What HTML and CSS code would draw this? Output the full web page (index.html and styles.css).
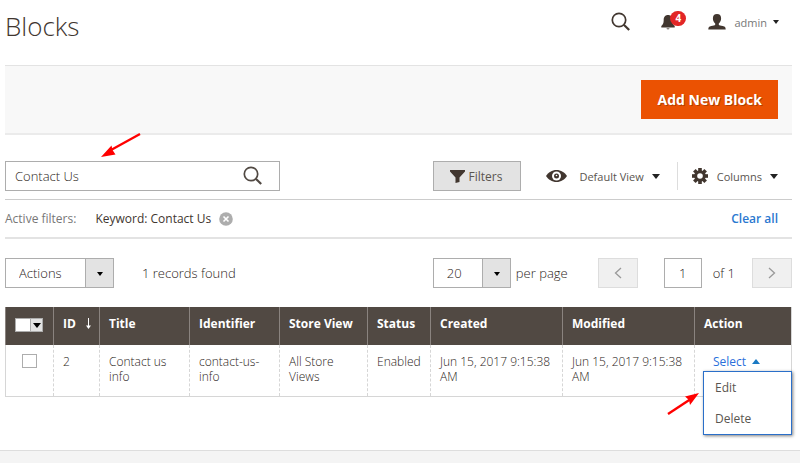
FILE: index.html
```html
<!DOCTYPE html>
<html lang="en">
<head>
  <meta charset="UTF-8">
  <meta name="viewport" content="width=device-width, initial-scale=1.0">
  <title>Blocks</title>
  <link rel="stylesheet" href="styles.css">
</head>
<body>
  <div class="page">
    <header class="page-header">
      <h1>Blocks</h1>
      <div class="header-tools">
        <button class="tool" type="button" aria-label="Search">
          <svg width="20" height="20" viewBox="0 0 20 20"><circle cx="8" cy="8" r="6.7" fill="none" stroke="#41362f" stroke-width="1.7"/><path d="M12.8 12.8l5.4 5.2" stroke="#41362f" stroke-width="2.2"/></svg>
        </button>
        <button class="tool notifications" type="button" aria-label="Notifications">
          <svg width="14" height="16" viewBox="0 0 14 16"><path d="M7 1c-3 0-4.300 2.300-4.300 5 0 3.500-.9 4.500-2.400 6v1.500h13.400V12c-1.500-1.500-2.400-2.500-2.400-6 0-2.700-1.300-5-4.300-5z" fill="#41362f"/><path d="M5.500 14h3a1.500 1.500 0 0 1-3 0z" fill="#8d8681"/></svg>
          <span class="badge">4</span>
        </button>
        <button class="tool account" type="button">
          <svg width="18" height="16" viewBox="0 0 18 16"><path d="M9 0C6.300 0 4.900 1.500 4.900 4.200c0 2.300.9 4.200 2.300 5.200v1.300c-.3.700-2 .9-4 1.300C1 12.500.3 13.300.3 15.600h17.400c0-2.300-.7-3.100-2.900-3.600-2-.4-3.700-.6-4-1.300V9.400c1.400-1 2.300-2.900 2.300-5.200C13.100 1.500 11.700 0 9 0z" fill="#41362f"/></svg>
          <span>admin</span>
          <i class="caret"></i>
        </button>
      </div>
    </header>

    <div class="page-actions">
      <button class="btn-primary" type="button">Add New Block</button>
    </div>

    <main>
      <div class="toolbar">
        <form class="search">
          <input type="text" value="Contact Us" aria-label="Search by keyword">
          <button type="submit" aria-label="Search">
            <svg width="20" height="20" viewBox="0 0 20 20"><circle cx="8" cy="8" r="6.700" fill="none" stroke="#514943" stroke-width="1.700"/><path d="M12.800 12.800l5.400 5.200" stroke="#514943" stroke-width="2.200"/></svg>
          </button>
          <svg class="pointer pointer-search" width="42" height="26" viewBox="0 0 42 26"><path d="M40 2L11 18" stroke="#f00" stroke-width="2.400"/><path d="M1 25l10.500-11.500 1 4.500 3 4.500z" fill="#f00"/></svg>
        </form>
        <button class="btn-filters" type="button">
          <svg width="15" height="13" viewBox="0 0 15 13"><path d="M0 0h15v1.500L9.500 7.500V12l-4 1V7.500L0 1.500z" fill="#41362f"/></svg>
          Filters
        </button>
        <button class="view-control" type="button">
          <svg width="21" height="14" viewBox="0 0 21 14"><path d="M10.500 1C6 1 2.300 3.400 0 7c2.300 3.600 6 6 10.500 6S18.700 10.600 21 7C18.700 3.400 15 1 10.500 1z" fill="#41362f"/><circle cx="10.500" cy="7" r="4.500" fill="#fff"/><circle cx="10.500" cy="7" r="2.500" fill="#41362f"/><circle cx="10.500" cy="6.500" r=".8" fill="#fff"/></svg>
          <span>Default View</span>
          <i class="caret"></i>
        </button>
        <button class="columns-control" type="button">
          <svg width="16" height="16" viewBox="-8 -8 16 16"><g fill="#41362f"><rect x="-1.800" y="-8" width="3.600" height="16"/><rect x="-1.800" y="-8" width="3.600" height="16" transform="rotate(45)"/><rect x="-1.800" y="-8" width="3.600" height="16" transform="rotate(90)"/><rect x="-1.800" y="-8" width="3.600" height="16" transform="rotate(135)"/><circle r="5.800"/></g><circle r="2.800" fill="#fff"/></svg>
          <span>Columns</span>
          <i class="caret"></i>
        </button>
      </div>

      <div class="active-filters">
        <span class="filters-label">Active filters:</span>
        <span class="filter">Keyword: Contact Us</span>
        <button class="filter-remove" type="button" aria-label="Remove filter">
          <svg width="14" height="14" viewBox="0 0 14 14"><circle cx="7" cy="7" r="6.800" fill="#adadad"/><path d="M4.500 4.500l5 5m0-5l-5 5" stroke="#fff" stroke-width="1.600"/></svg>
        </button>
        <a class="clear-all" href="#">Clear all</a>
      </div>

      <div class="grid-controls">
        <div class="select select-actions">
          <select aria-label="Actions"><option>Actions</option></select>
        </div>
        <span class="records">1 records found</span>
        <div class="pager">
          <div class="select select-size">
            <select id="page-size"><option>20</option></select>
          </div>
          <label for="page-size">per page</label>
          <button class="page-btn" type="button" aria-label="Previous page">
            <svg width="8" height="12" viewBox="0 0 8 12"><path d="M7 1L1.500 6 7 11" fill="none" stroke="#999" stroke-width="1.300"/></svg>
          </button>
          <input id="page-number" class="page-number" type="text" value="1">
          <label for="page-number">of 1</label>
          <button class="page-btn page-next" type="button" aria-label="Next page">
            <svg width="8" height="12" viewBox="0 0 8 12"><path d="M1 1l5.500 5L1 11" fill="none" stroke="#999" stroke-width="1.300"/></svg>
          </button>
        </div>
      </div>

      <table class="data-grid">
        <colgroup>
          <col class="col-check">
          <col class="col-id">
          <col class="col-title">
          <col class="col-identifier">
          <col class="col-store">
          <col class="col-status">
          <col>
          <col>
          <col class="col-action">
        </colgroup>
        <thead>
          <tr>
            <th>
              <div class="multicheck">
                <input type="checkbox" aria-label="Select all">
                <button type="button" aria-label="Selection options"><i class="caret"></i></button>
              </div>
            </th>
            <th>
              <div class="sorted">ID
                <svg width="5" height="11" viewBox="0 0 5 11"><path d="M2.500 0v9" stroke="#fff"/><path d="M0 7.500h5L2.500 11z" fill="#fff"/></svg>
              </div>
            </th>
            <th>Title</th>
            <th>Identifier</th>
            <th>Store View</th>
            <th>Status</th>
            <th>Created</th>
            <th>Modified</th>
            <th>Action</th>
          </tr>
        </thead>
        <tbody>
          <tr>
            <td class="check-cell"><input type="checkbox" aria-label="Select row"></td>
            <td>2</td>
            <td>Contact us info</td>
            <td>contact-us-info</td>
            <td>All Store Views</td>
            <td>Enabled</td>
            <td>Jun 15, 2017 9:15:38 AM</td>
            <td>Jun 15, 2017 9:15:38 AM</td>
            <td class="action-cell">
              <button class="action-select" type="button">Select <i class="caret caret-up"></i></button>
              <ul class="action-menu">
                <li><a href="#">Edit</a></li>
                <li><a href="#">Delete</a></li>
              </ul>
              <svg class="pointer pointer-menu" width="34" height="24" viewBox="0 0 34 24"><path d="M2 22L24 7.500" stroke="#f00" stroke-width="2.400"/><path d="M33 1L19 4.500l4 3.500 1 5z" fill="#f00"/></svg>
            </td>
          </tr>
        </tbody>
      </table>
    </main>
  </div>
  <footer></footer>
</body>
</html>
```
FILE: styles.css
```css
* {
  box-sizing: border-box;
}

body {
  margin: 0;
  min-height: 100vh;
  display: flex;
  flex-direction: column;
  font-family: "Open Sans", sans-serif;
  font-size: 12px;
  line-height: 15px;
  color: #5a5550;
  background: #fff;
}

button,
input,
select {
  font: inherit;
  color: inherit;
  margin: 0;
}

button {
  display: flex;
  align-items: center;
  padding: 0;
  border: 0;
  background: none;
  cursor: pointer;
}

svg {
  display: block;
  flex: none;
}

.page {
  padding: 0 8px 53px 5px;
}

.caret {
  flex: none;
  border: 4px solid transparent;
  border-top: 5px solid #222;
  border-bottom: 0;
}

.caret-up {
  border-top: 0;
  border-bottom: 5px solid #1979c3;
}

/* Header */
.page-header {
  display: flex;
  justify-content: space-between;
  height: 65px;
  padding: 8px 13px 0 0;
}

h1 {
  margin: 0;
  font-size: 26px;
  line-height: 36px;
  font-weight: 300;
  color: #41362f;
}

.header-tools {
  display: flex;
  align-items: center;
  height: 28px;
}

.header-tools .caret {
  border-width: 4px 3px 0;
}

.notifications {
  position: relative;
  margin: 0 33px 0 30px;
}

.badge {
  position: absolute;
  left: 9px;
  top: -3px;
  width: 16px;
  border-radius: 8px;
  background: #e22626;
  color: #fff;
  font-size: 10px;
  line-height: 15px;
  font-weight: 700;
}

.account {
  color: #777;
}

.account span {
  margin: 0 6px 0 8px;
  font-size: 11px;
}

.page-actions {
  display: flex;
  justify-content: flex-end;
  padding: 14px;
  border-top: 1px solid #e3e3e3;
  border-bottom: 2px solid #ebebeb;
  background: #f8f8f8;
}

.btn-primary {
  height: 39px;
  padding: 0 16px;
  background: #eb5202;
  color: #fff;
  font-size: 14px;
  font-weight: 700;
  text-shadow: 1px 1px 0 rgba(0, 0, 0, 0.25);
}

/* Toolbar */
.toolbar {
  display: flex;
  align-items: center;
  padding: 26px 14px 8px 0;
}

.search {
  position: relative;
  display: flex;
  flex: 0 1 275px;
  height: 30px;
  margin-right: auto;
  border: 1px solid #adadad;
}

.search input {
  flex: 1;
  min-width: 0;
  padding: 0 9px;
  border: 0;
  outline: 0;
  background: none;
}

.search button {
  padding: 0 16px;
}

.pointer {
  position: absolute;
  pointer-events: none;
}

.pointer-search {
  left: 94px;
  top: -30px;
}

.btn-filters {
  gap: 4px;
  height: 30px;
  padding: 0 18px 0 16px;
  border: 1px solid #adadad;
  background: #e3e3e3;
}

.view-control {
  margin-left: 25px;
}

.view-control,
.columns-control {
  font-size: 11px;
}

.view-control span {
  margin: 0 8px 0 12px;
}

.columns-control {
  height: 28px;
  margin-left: 17px;
  padding-left: 14px;
  border-left: 1px solid #ddd;
}

.columns-control span {
  margin: 0 8px 0 9px;
}

.active-filters {
  display: flex;
  align-items: center;
  height: 40px;
  padding-right: 14px;
  border-top: 1px solid #ccc;
  border-bottom: 2px solid #e3e3e3;
}

.filters-label {
  margin-right: 19px;
  color: #777;
}

.filter {
  margin-right: 8px;
  color: #41362f;
}

.clear-all {
  margin-left: auto;
  color: #2a78d0;
  font-weight: 600;
  text-decoration: none;
}

/* Mass actions and paging */
.grid-controls {
  display: flex;
  align-items: center;
  padding: 19px 0;
}

.select {
  position: relative;
  height: 30px;
  border: 1px solid #adadad;
}

.select select {
  width: 100%;
  height: 100%;
  padding: 0 13px;
  border: 0;
  outline: 0;
  appearance: none;
  background: linear-gradient(to left, #e3e3e3 27px, #adadad 27px, #adadad 28px, #fff 28px);
}

.select::after {
  content: "";
  position: absolute;
  right: 10px;
  top: 13px;
  border: 3px solid transparent;
  border-top: 4px solid #000;
  border-bottom: 0;
  pointer-events: none;
}

.select-actions {
  width: 109px;
}

.select-size {
  width: 78px;
  margin-right: 5px;
}

.search,
.grid-controls {
  font-size: 13px;
  font-weight: 300;
  color: #2b2420;
}

.records {
  margin-left: 28px;
}

.pager {
  display: flex;
  align-items: center;
  margin-left: auto;
}

.page-btn {
  justify-content: center;
  width: 40px;
  height: 30px;
  margin: 0 26px 0 30px;
  border: 1px solid #ddd;
  background: #f0f0f0;
}

.page-next {
  margin: 0 0 0 17px;
}

.page-number {
  width: 38px;
  height: 30px;
  margin-right: 11px;
  padding: 0;
  border: 1px solid #adadad;
  text-align: center;
}

/* Grid */
.data-grid {
  width: 100%;
  table-layout: fixed;
  border-spacing: 0;
  border-right: 1px solid #d6d6d6;
  border-bottom: 1px solid #d6d6d6;
}

.col-check { width: 48px; }
.col-id { width: 46px; }
.col-title { width: 90px; }
.col-identifier { width: 90px; }
.col-store { width: 88px; }
.col-status { width: 63px; }
.col-action { width: 97px; }

th {
  height: 38px;
  padding: 9px 0 0 9px;
  border-left: 1px solid #8a837f;
  background: #514943;
  color: #fff;
  font-weight: 700;
  text-align: left;
  vertical-align: top;
}

td {
  height: 51px;
  padding: 9px 3px 0 9px;
  border-left: 1px dashed #d6d6d6;
  font-weight: 300;
  color: #2b2420;
  vertical-align: top;
}

.sorted {
  display: flex;
  align-items: center;
  gap: 10px;
}

.multicheck {
  display: flex;
  width: 28px;
  height: 14px;
  margin-top: 2px;
  border: 1px solid #adadad;
}

input[type="checkbox"] {
  display: block;
  width: 15px;
  height: 14px;
  appearance: none;
  border: 1px solid #adadad;
  background: #fff;
}

.multicheck input[type="checkbox"] {
  height: 12px;
  border-width: 0 1px 0 0;
}

.multicheck button {
  flex: 1;
  justify-content: center;
  background: #e3e3e3;
}

.multicheck .caret {
  border-top-color: #000;
}

.check-cell {
  padding-left: 16px;
  border-left-style: solid;
}

.action-cell {
  position: relative;
  font-weight: 400;
}

.action-select {
  gap: 6px;
  margin-left: 9px;
  color: #2a6fdb;
}

.action-menu {
  position: absolute;
  z-index: 1;
  left: 8px;
  right: -1px;
  top: 26px;
  margin: 0;
  padding: 0;
  list-style: none;
  border: 1px solid #2a6fc9;
  background: #fff;
  box-shadow: 1px 1px 3px rgba(0, 0, 0, 0.5);
}

.action-menu a {
  display: block;
  padding: 8px 11px;
  color: #5a5550;
  text-decoration: none;
}

.pointer-menu {
  left: -29px;
  top: 47px;
}

footer {
  flex: 1;
  border-top: 1px solid #ddd;
  background: #f4f4f4;
}
```
